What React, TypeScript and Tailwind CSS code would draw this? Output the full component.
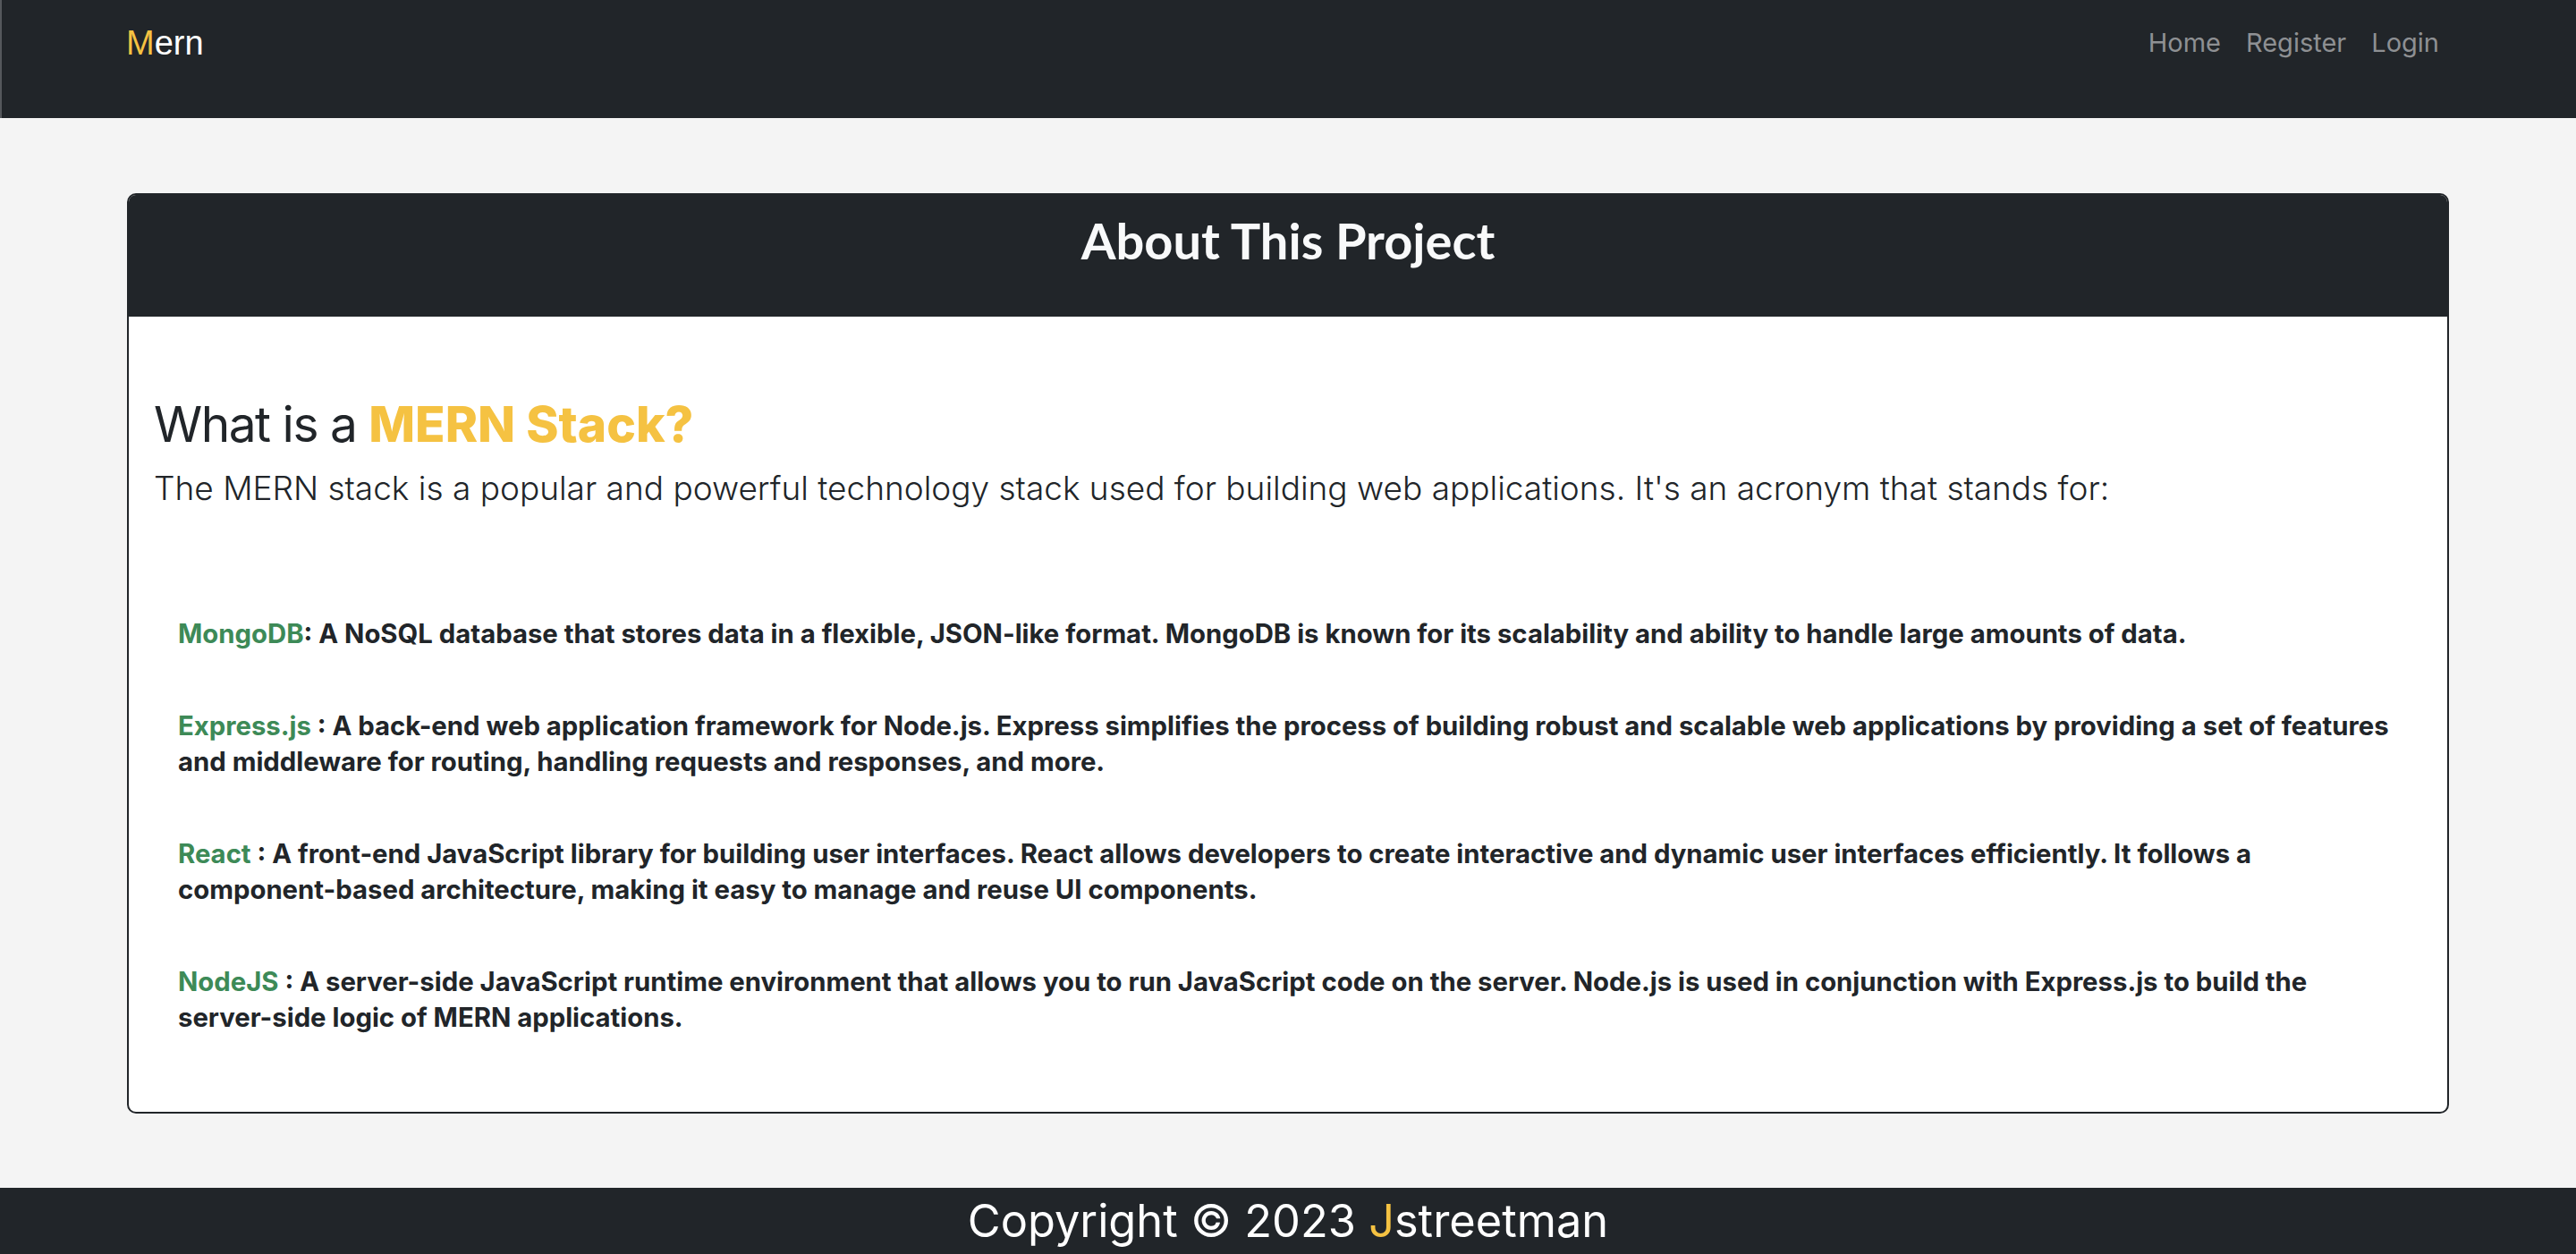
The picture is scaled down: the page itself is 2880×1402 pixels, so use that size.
import React from "react";

const items = [
  {
    name: "MongoDB",
    sep: ": ",
    text: "A NoSQL database that stores data in a flexible, JSON-like format. MongoDB is known for its scalability and ability to handle large amounts of data.",
  },
  {
    name: "Express.js",
    sep: " : ",
    text: "A back-end web application framework for Node.js. Express simplifies the process of building robust and scalable web applications by providing a set of features and middleware for routing, handling requests and responses, and more.",
  },
  {
    name: "React",
    sep: " : ",
    text: "A front-end JavaScript library for building user interfaces. React allows developers to create interactive and dynamic user interfaces efficiently. It follows a component-based architecture, making it easy to manage and reuse UI components.",
  },
  {
    name: "NodeJS",
    sep: " : ",
    text: "A server-side JavaScript runtime environment that allows you to run JavaScript code on the server. Node.js is used in conjunction with Express.js to build the server-side logic of MERN applications.",
  },
];

export default function App() {
  const poppins = { fontFamily: "Inter, 'Open Sans', sans-serif" };
  return (
    <div className="min-h-[1402px] bg-[#f4f4f4] flex flex-col" style={poppins}>
      <nav className="h-[132px] bg-[#212529] border-l-2 border-[#55585c]">
        <div className="w-[2592px] mx-auto flex justify-between pt-[24px]">
          <a
            className="text-[38px] leading-[48px] text-white ml-[-4px]"
            style={{ fontFamily: "'Liberation Sans', Arial, sans-serif" }}
          >
            <span className="text-[#f5c242]">M</span>ern
          </a>
          <div className="flex text-[29px] leading-[48px] text-[#8e9093] mr-[-2px]">
            <a className="px-[14px]">Home</a>
            <a className="px-[14px]">Register</a>
            <a className="pl-[14px] pr-[12px]">Login</a>
          </div>
        </div>
      </nav>

      <main className="w-[2596px] mx-auto mt-[84px]">
        <div className="border-2 border-[#212529] rounded-[10px] overflow-hidden bg-white">
          <div className="h-[136px] bg-[#212529] flex items-center justify-center pb-[34px]">
            <h1
              className="text-[56px] font-bold text-[#f8f9fa] leading-none"
              style={{ fontFamily: "Lato, sans-serif" }}
            >
              About This Project
            </h1>
          </div>
          <div className="pl-[28px] pr-[54px] pt-[85px] pb-[85px] text-[#212529]">
            <h2 className="text-[55px] leading-[70px] font-normal">
              <span className="tracking-[-1.5px]">What is a </span>
              <span className="font-extrabold text-[#f5c242]">MERN Stack?</span>
            </h2>
            <p className="text-[37px] leading-[54px] font-light mt-[10px]">
              The MERN stack is a popular and powerful technology stack used for building web
              applications. It's an acronym that stands for:
            </p>
            <ul className="mt-[116px] pl-[27px] flex flex-col gap-[63px]">
              {items.map((it) => (
                <li key={it.name} className="text-[29.3px] leading-[40px] font-bold">
                  <span className="text-[#3d8a57]">{it.name}</span>
                  {it.sep}
                  {it.text}
                </li>
              ))}
            </ul>
          </div>
        </div>
      </main>

      <footer className="mt-auto h-[74px] bg-[#212529] flex items-center justify-center">
        <p className="text-[50.5px] leading-none text-white">
          Copyright © 2023 <span className="text-[#f5c242]">J</span>streetman
        </p>
      </footer>
    </div>
  );
}
